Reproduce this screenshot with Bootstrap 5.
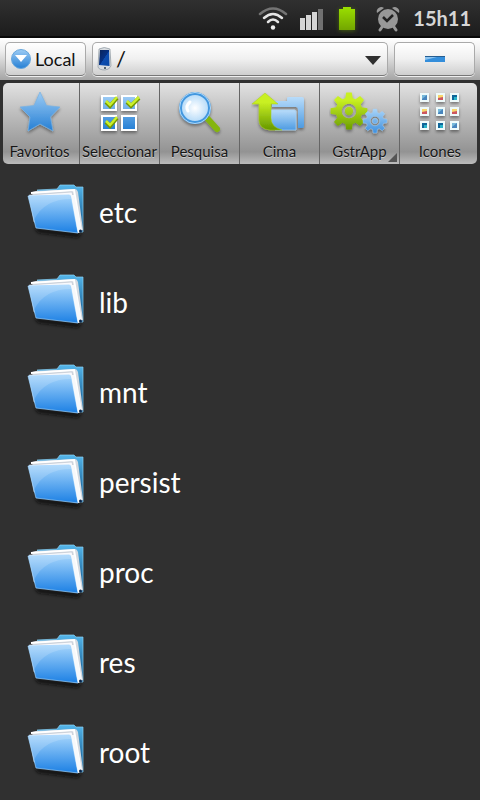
<!DOCTYPE html>
<html lang="pt">
<head>
<meta charset="utf-8">
<meta name="viewport" content="width=device-width, initial-scale=1">
<title>Explorador de ficheiros</title>
<link href="https://cdn.jsdelivr.net/npm/bootstrap@5.3.0/dist/css/bootstrap.min.css" rel="stylesheet">
<style>
body { background: #303030; font-family: Lato, "Open Sans", sans-serif; min-height: 100vh; }
svg { display: block; flex: none; }
.status-bar { height: 38px; padding: 0 9px 0 16px; background: linear-gradient(#303030, #1c1c1c); border-bottom: 2px solid #080808; color: #d6d6d6; }
.status-gap { margin-right: 12px; }
.clock { font-size: 20px; line-height: 24px; }
.address-bar { height: 42px; padding: 4px 5px; background: linear-gradient(#fff, #eee 30%, #a5a5a5); }
.address-bar .control { height: 34px; border: 1px solid #aaa; border-bottom-color: #777; border-radius: 5px; background: linear-gradient(#fff, #f0f0f0 50%, #cfcfcf); color: #111; box-shadow: 0 1px 0 #eee; }
.address-bar { gap: 6px; }
.local-btn { width: 81px; padding: 0 5px; font-size: 18px; }
.minus-btn { width: 81px; }
.path-select { appearance: none; padding: 0 30px 0 23px; font-size: 22px; line-height: 30px; }
.path-icon { left: 5px; top: 5px; }
.path-caret { right: 7px; top: 13px; }
.toolbar { padding-top: 3px; }
.tool { height: 81px; padding: 4px 0 0; border: 0; border-right: 1px solid #656565; background: linear-gradient(#e2e2e2, #c0c0c0 35%, #939393 85%, #bcbcbc); color: #161616; font-size: 15px; line-height: 18px; text-shadow: 0 1px 0 #c9c9c9; }
.tool-first { margin-left: 3px; padding-right: 3px; border-radius: 5px 0 0 5px; }
.tool-last { margin-right: 3px; padding-left: 3px; border-right: 0; border-radius: 0 5px 5px 0; }
.corner { right: 2px; bottom: 2px; }
.files { padding-top: 3px; }
.file { height: 90px; padding: 0 24px; gap: 11px; color: #fff; font-size: 28px; line-height: 32px; }
.file:hover { color: #fff; background: #3a3a3a; }
</style>
<script src="https://cdn.jsdelivr.net/npm/bootstrap@5.3.0/dist/js/bootstrap.bundle.min.js"></script>
</head>
<body>
<svg width="0" height="0" class="position-absolute" aria-hidden="true">
<defs>
<linearGradient id="blue" x2="0" y2="1"><stop stop-color="#9dccf5"/><stop offset="1" stop-color="#257fd4"/></linearGradient>
<linearGradient id="pale" x2="0" y2="1"><stop stop-color="#b9dcfa"/><stop offset="1" stop-color="#4d9be2"/></linearGradient>
<linearGradient id="green" x2="0" y2="1"><stop offset=".25" stop-color="#c9f022"/><stop offset="1" stop-color="#659700"/></linearGradient>
<linearGradient id="gear-green" gradientUnits="userSpaceOnUse" x1="0" y1="-20" x2="0" y2="20"><stop offset=".2" stop-color="#c9f022"/><stop offset="1" stop-color="#6c9e00"/></linearGradient>
<linearGradient id="gear-blue" gradientUnits="userSpaceOnUse" x1="0" y1="-20" x2="0" y2="20"><stop stop-color="#a9d4f8"/><stop offset="1" stop-color="#3f90de"/></linearGradient>
<linearGradient id="battery" x2="0" y2="1"><stop stop-color="#9be000"/><stop offset="1" stop-color="#73a600"/></linearGradient>
<linearGradient id="front" x2="0" y2="1"><stop stop-color="#a5d5fc"/><stop offset="1" stop-color="#1c80e4"/></linearGradient>
<linearGradient id="back" x2="0" y2="1"><stop stop-color="#55b6ea"/><stop offset="1" stop-color="#0b4d83"/></linearGradient>
<linearGradient id="screen" x2="1" y2="1"><stop stop-color="#0a2459"/><stop offset=".5" stop-color="#053083"/><stop offset=".52" stop-color="#0d4db0"/><stop offset="1" stop-color="#0747a5"/></linearGradient>
<radialGradient id="glass"><stop stop-color="#fff"/><stop offset="1" stop-color="#b2d9f8"/></radialGradient>
<filter id="shade" x="-20%" y="-20%" width="150%" height="150%"><feDropShadow dx="0" dy="2" stdDeviation="1.5" flood-opacity=".4"/></filter>
<filter id="soft" x="-20%" y="-50%" width="140%" height="200%"><feGaussianBlur stdDeviation="1.5"/></filter>
<filter id="glow" x="-40%" y="-40%" width="180%" height="180%"><feGaussianBlur stdDeviation="2"/></filter>
<path id="gear" fill-rule="evenodd" d="M-4-14L-3-20H3L4-14L7.100-12.700L12-16.300L16.300-12L12.700-7.100L14-4L20-3V3L14 4L12.700 7.100L16.300 12L12 16.300L7.100 12.700L4 14L3 20H-3L-4 14L-7.100 12.700L-12 16.300L-16.300 12L-12.700 7.100L-14 4L-20 3V-3L-14-4L-12.700-7.100L-16.300-12L-12-16.300L-7.100-12.700ZM-8 0A8 8 0 0 0 8 0A8 8 0 0 0-8 0Z"/>
<symbol id="folder" viewBox="0 0 64 60">
<path d="M10 46L58 51L54 56L14 51Z" fill="#111" opacity=".8" filter="url(#soft)"/>
<path d="M13 8L33 7L36 3H50L52 5H59V50H52Z" fill="url(#back)" stroke="#8bd1f3" stroke-width=".7"/>
<path d="M8 10L12 9L51 7Q53 7 54 10L59 48L54 51L13 42Z" fill="#d3d9e0"/>
<path d="M7 11L50 8L57 49" fill="none" stroke="#fff" stroke-width="2"/>
<path d="M5 13L48 10L56 50L10 40Z" fill="#f8f9fc" stroke="#b4bdc9" stroke-width=".5"/>
<path d="M4 14L45 13Q46.500 13 47 15L54 51L12 46Z" fill="url(#front)" stroke="#9ad1ff" stroke-width=".7"/>
<path d="M4 14L46 13L47 17Q20 17 10 38Z" fill="#fff" opacity=".16"/>
<path d="M47 13L50 13L58 49L54 51Z" fill="#f7f9fb"/><circle cx="56.500" cy="49" r="1.500" fill="#07254b"/>
</symbol>
<symbol id="photo-a" viewBox="0 0 9 9"><path d="M0 0H9V9H0Z" fill="#eefafa"/><path d="M2 2H7V7H2Z" fill="#4785bd"/><path d="M2 2H7L2 6Z" fill="#77b9da"/></symbol>
<symbol id="photo-b" viewBox="0 0 9 9"><path d="M0 0H9V9H0Z" fill="#eefafa"/><path d="M2 2H7V7H2Z" fill="#f8d66c"/><path d="M2 5L7 4V7H2Z" fill="#cc5761"/></symbol>
<symbol id="photo-c" viewBox="0 0 9 9"><path d="M0 0H9V9H0Z" fill="#eefafa"/><path d="M2 2H7V7H2Z" fill="#086699"/><path d="M4 4H7V7H4Z" fill="#25b3c9"/></symbol>
</defs>
</svg>

<header class="status-bar d-flex align-items-center justify-content-end">
<svg class="me-2" width="32" height="28" viewBox="0 0 32 28" fill="none" stroke-linecap="round" aria-label="Wi-Fi"><path d="M3 10Q16-1 29 10" stroke="#747474" stroke-width="2.500"/><path d="M7 14Q16 6 25 14M11 18Q16 13 21 18" stroke="#e5e5e5" stroke-width="2.500"/><circle cx="16" cy="23.500" r="2.200" fill="#eee"/></svg>
<svg width="34" height="28" viewBox="0 0 34 28" aria-label="Rede"><path d="M3 14H8V26H3ZM9 11H14V26H9ZM15 8H20V26H15Z" fill="#d5d5d5"/><path d="M21 5H26V26H21Z" fill="#717171"/></svg>
<svg class="status-gap" width="32" height="32" viewBox="0 0 32 32" aria-label="Bateria"><path d="M8 7H24V29H8Z" fill="#659500" opacity=".5" filter="url(#glow)"/><path d="M8 7H12V5H20V7H24V28H8Z" fill="url(#battery)"/></svg>
<svg class="status-gap" width="26" height="28" viewBox="0 0 26 28" aria-label="Alarme"><g fill="#989898"><path d="M2 9A4.500 4.500 0 0 1 9 4Z"/><path d="M24 9A4.500 4.500 0 0 0 17 4Z"/><circle cx="13" cy="15" r="10"/></g><path d="M7 23L5 26M19 23L21 26" stroke="#989898" stroke-width="3" stroke-linecap="round"/><path d="M8 13L12 17L18 11" fill="none" stroke="#222" stroke-width="2.500"/></svg>
<span class="clock fw-bold">15h11</span>
</header>

<div class="address-bar d-flex">
<button type="button" class="control local-btn d-flex align-items-center"><svg class="me-1" width="20" height="20" viewBox="0 0 20 20"><circle cx="10" cy="10" r="9.500" fill="url(#blue)" stroke="#68a7dc"/><path d="M4 6H16L10 13Z" fill="#fff"/></svg>Local</button>
<div class="position-relative flex-grow-1">
<select class="control path-select w-100" aria-label="Caminho"><option>/</option></select>
<svg class="path-icon position-absolute pe-none" width="15" height="24" viewBox="0 0 15 24"><path d="M2 2Q7-1 13 2L14 19Q12 23 8 23Q2 23 1 20Z" fill="#d8dce0" stroke="#8b969f" stroke-width=".7"/><path d="M3 3H12L12.500 19L2 18Z" fill="url(#screen)"/><circle cx="8" cy="21" r="1" fill="#2c4051"/></svg>
<svg class="path-caret position-absolute pe-none" width="16" height="10" viewBox="0 0 16 10"><path d="M0 1H16L8 10Z" fill="#303030"/></svg>
</div>
<button type="button" class="control minus-btn d-flex align-items-center justify-content-center" aria-label="Minimizar"><svg width="20" height="6" viewBox="0 0 20 6"><path d="M0 0H20V6H0Z" fill="#348edb"/><path d="M0 1H12L0 4Z" fill="#8dc4ef"/><path d="M0 0H20V1H0Z" fill="#255d91"/></svg></button>
</div>

<nav class="toolbar row row-cols-6 g-0" aria-label="Ferramentas">
<div class="col d-flex"><button type="button" class="tool tool-first flex-fill d-flex flex-column align-items-center"><svg width="50" height="55" viewBox="0 0 50 55"><path filter="url(#shade)" d="M26 5L32.500 18.500L46 20L36.500 30L39 44L26 37L14 44L16 30L6 20L20 18.500Z" fill="url(#blue)" stroke="#78b1e2" stroke-width=".7"/></svg>Favoritos</button></div>
<div class="col d-flex"><button type="button" class="tool flex-fill d-flex flex-column align-items-center"><svg width="52" height="55" viewBox="0 0 52 55"><g fill="url(#blue)" stroke="#fff" stroke-width="2" filter="url(#shade)"><path d="M9 9H23V23H9ZM29 9H43V23H29ZM9 29H23V43H9ZM29 29H43V43H29Z"/></g><path d="M13 15L17 19L24 11M34 15L38 19L46 11M13 35L17 39L24 31" fill="none" stroke="#749900" stroke-width="4"/><path d="M13 14L17 18L24 10M34 14L38 18L46 10M13 34L17 38L24 30" fill="none" stroke="#caf02a" stroke-width="2.500"/></svg>Seleccionar</button></div>
<div class="col d-flex"><button type="button" class="tool flex-fill d-flex flex-column align-items-center"><svg width="52" height="55" viewBox="0 0 52 55"><g filter="url(#shade)"><path d="M34 31L44 42" stroke="#85b50b" stroke-width="6" stroke-linecap="round"/><circle cx="22" cy="21" r="14.500" fill="url(#glass)" stroke="#4397df" stroke-width="3"/></g><circle cx="22" cy="21" r="15.500" fill="none" stroke="#b0d8f7"/><path d="M15 24Q12 19 17 15" fill="none" stroke="#fff" stroke-width="3" stroke-linecap="round"/></svg>Pesquisa</button></div>
<div class="col d-flex"><button type="button" class="tool flex-fill d-flex flex-column align-items-center"><svg width="56" height="55" viewBox="0 0 56 55"><g filter="url(#shade)"><path d="M21 14H36V11Q36 10 38 10H51Q53 10 53 12V39Q53 41 50 41H47V23Q47 20 45 20H21Z" fill="url(#pale)"/><path d="M20 23H43Q45 23 45 25V43H24Q20 37 20 32Z" fill="url(#pale)" stroke="#a5d0f3" stroke-width=".7"/><path d="M14 6L27 17H20V31Q20 40 31 43H19Q8 42 8 33V17H1Z" fill="url(#green)" stroke="#a8cf16" stroke-width=".5"/></g></svg>Cima</button></div>
<div class="col d-flex"><button type="button" class="tool position-relative flex-fill d-flex flex-column align-items-center"><svg width="60" height="55" viewBox="0 0 60 55"><g filter="url(#shade)"><g transform="translate(20 24) scale(.92)" fill="url(#gear-green)"><use href="#gear"/><circle r="4.500"/></g><g transform="translate(46 34) scale(.6)" fill="url(#gear-blue)" stroke="#a7d0f3" stroke-width=".7"><use href="#gear"/><circle r="4.500"/></g></g></svg>GstrApp<svg class="corner position-absolute" width="9" height="9" viewBox="0 0 9 9"><path d="M9 0V9H0Z" fill="#555"/></svg></button></div>
<div class="col d-flex"><button type="button" class="tool tool-last flex-fill d-flex flex-column align-items-center"><svg width="52" height="55" viewBox="0 0 52 55"><g filter="url(#shade)"><use href="#photo-a" x="6" y="6" width="9" height="9"/><use href="#photo-b" x="22" y="6" width="9" height="9"/><use href="#photo-c" x="36" y="6" width="9" height="9"/><use href="#photo-b" x="6" y="20" width="9" height="9"/><use href="#photo-a" x="22" y="20" width="9" height="9"/><use href="#photo-b" x="36" y="20" width="9" height="9"/><use href="#photo-c" x="6" y="34" width="9" height="9"/><use href="#photo-c" x="22" y="34" width="9" height="9"/><use href="#photo-a" x="36" y="34" width="9" height="9"/></g></svg>Icones</button></div>
</nav>

<main class="files">
<a href="#etc" class="file d-flex align-items-center text-decoration-none"><svg width="64" height="60"><use href="#folder"/></svg>etc</a>
<a href="#lib" class="file d-flex align-items-center text-decoration-none"><svg width="64" height="60"><use href="#folder"/></svg>lib</a>
<a href="#mnt" class="file d-flex align-items-center text-decoration-none"><svg width="64" height="60"><use href="#folder"/></svg>mnt</a>
<a href="#persist" class="file d-flex align-items-center text-decoration-none"><svg width="64" height="60"><use href="#folder"/></svg>persist</a>
<a href="#proc" class="file d-flex align-items-center text-decoration-none"><svg width="64" height="60"><use href="#folder"/></svg>proc</a>
<a href="#res" class="file d-flex align-items-center text-decoration-none"><svg width="64" height="60"><use href="#folder"/></svg>res</a>
<a href="#root" class="file d-flex align-items-center text-decoration-none"><svg width="64" height="60"><use href="#folder"/></svg>root</a>
</main>
</body>
</html>
